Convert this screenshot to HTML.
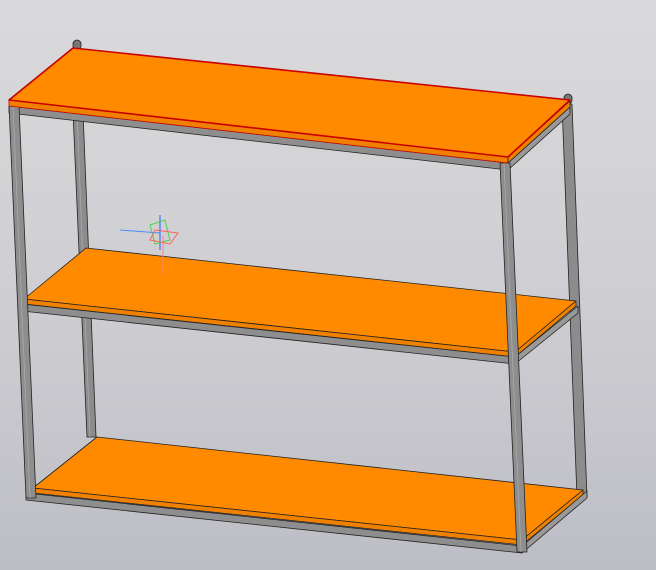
<!DOCTYPE html>
<html><head><style>
html,body{margin:0;padding:0;width:656px;height:570px;overflow:hidden}
body{background:linear-gradient(#dadadc,#cfcfd3 50%,#bdbdc5)}
</style></head><body>
<svg width="656" height="570" viewBox="0 0 656 570" xmlns="http://www.w3.org/2000/svg">
<g stroke="#222" stroke-width="0.8" stroke-linejoin="round">
<!-- back legs -->
<polygon points="73,112 83,112 96,437 87,437" fill="#8c8c8c"/>
<line x1="77" y1="112" x2="90" y2="437" stroke="#aaa"/>
<polygon points="562,104 572,104 587,497 577,497" fill="#8c8c8c"/>
<rect x="73" y="40" width="8" height="10" rx="4" fill="#777"/>
<rect x="564" y="94" width="8" height="10" rx="4" fill="#777"/>
<!-- bottom shelf -->
<polygon points="97,437 583,490 522,540 33,488" fill="#ff8a00"/>
<polygon points="33,488 522,540 522,545 33,493" fill="#f08000"/>
<polygon points="522,540 583,490 583,495 522,545" fill="#f08000"/>
<polygon points="26,493 522,546 522,553 26,500" fill="#8e8e8e"/>
<polygon points="522,546 587,491 587,498 522,553" fill="#999"/>
<!-- middle shelf -->
<polygon points="86,248 576,301 515,352 24,299" fill="#ff8a00"/>
<polygon points="24,299 515,352 515,357 24,304" fill="#f08000"/>
<polygon points="515,352 576,301 576,306 515,357" fill="#f08000"/>
<polygon points="22,304 515,357 515,364 22,311" fill="#8e8e8e"/>
<polygon points="515,357 578,306 578,313 515,364" fill="#999"/>
<!-- top shelf frame -->
<polygon points="9,106 508,163 508,170 9,113" fill="#8e8e8e"/>
<polygon points="508,163 570,107 570,114 508,170" fill="#999"/>
<!-- front legs -->
<polygon points="9,106 19,106 36,498 26,498" fill="#8e8e8e"/>
<line x1="13" y1="106" x2="30" y2="498" stroke="#aaa"/>
<polygon points="500,163 510,163 527,552 517,552" fill="#8e8e8e"/>
<line x1="504" y1="163" x2="521" y2="552" stroke="#aaa"/>
<!-- top shelf -->
<polygon points="9,100 508,157 508,163 9,106" fill="#f08000" stroke="#c00"/>
<polygon points="508,157 570,101 570,107 508,163" fill="#f08000"/>
<polygon points="73,48 570,100 508,157 9,100" fill="#ff8a00" stroke="#c80000" stroke-width="1.6"/>
</g>
<!-- axis icon -->
<g stroke-width="1">
<line x1="120" y1="230" x2="160" y2="233" stroke="#4a8cff"/>
<line x1="163" y1="236" x2="163" y2="275" stroke="#ff8080"/>
<line x1="160" y1="215" x2="160" y2="250" stroke="#2060ff"/>
<polygon points="150,225 165,220 170,240 155,244" fill="none" stroke="#50d050"/>
<polygon points="155,230 178,233 170,244 150,240" fill="none" stroke="#ff6060"/>
</g>
</svg>
</body></html>
